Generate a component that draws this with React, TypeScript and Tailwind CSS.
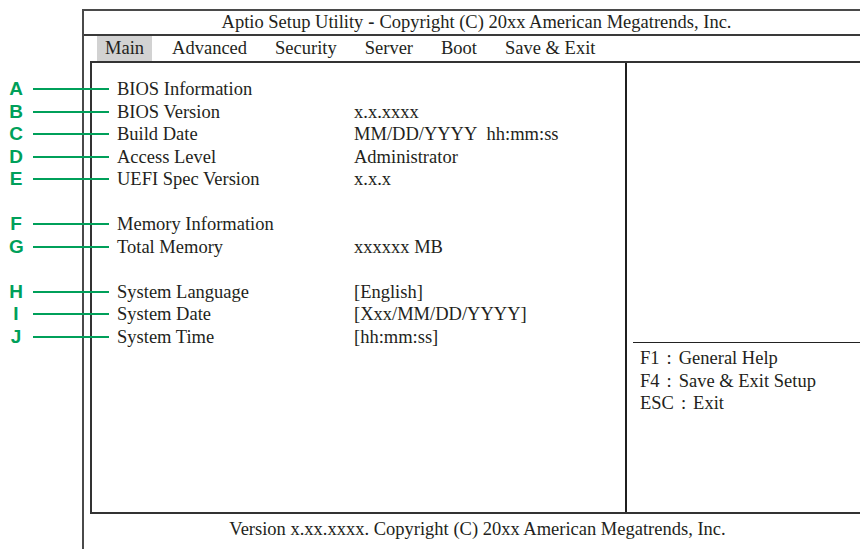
import React from "react";

interface RowType {
  callout?: string;
  label?: string;
  value?: string;
}

const rows: RowType[] = [
  { callout: "A", label: "BIOS Information" },
  { callout: "B", label: "BIOS Version", value: "x.x.xxxx" },
  { callout: "C", label: "Build Date", value: "MM/DD/YYYY\u00a0\u00a0hh:mm:ss" },
  { callout: "D", label: "Access Level", value: "Administrator" },
  { callout: "E", label: "UEFI Spec Version", value: "x.x.x" },
  {},
  { callout: "F", label: "Memory Information" },
  { callout: "G", label: "Total Memory", value: "xxxxxx MB" },
  {},
  { callout: "H", label: "System Language", value: "[English]" },
  { callout: "I", label: "System Date", value: "[Xxx/MM/DD/YYYY]" },
  { callout: "J", label: "System Time", value: "[hh:mm:ss]" },
];

const menu = ["Main", "Advanced", "Security", "Server", "Boot", "Save & Exit"];

const help = [
  { key: "F1", text: "General Help" },
  { key: "F4", text: "Save & Exit Setup" },
  { key: "ESC", text: "Exit" },
];

const App: React.FC = () => {
  return (
    <div className="relative w-[860px] h-[549px] overflow-hidden bg-white text-[#231f20] font-['Liberation_Serif',serif] text-[18.5px]">
      <div className="flex pl-[82px] pt-[9px]">
        <div className="w-[791px] h-[600px] shrink-0 border-t-2 border-l-2 border-[#4a4a4a]">
          {/* title */}
          <div className="h-[25px] flex items-center justify-center border-b-2 border-[#3a3a3a] leading-none pr-[4px]">
            Aptio Setup Utility <span className="font-bold mx-[5px]">-</span> Copyright (C) 20xx American Megatrends, Inc.
          </div>

          {/* menu bar */}
          <div className="h-[25px] flex items-stretch pl-[13px] gap-[12px]">
            {menu.map((item, i) => (
              <div
                key={item}
                className={`flex items-center px-[8px] leading-none ${
                  i === 0 ? "bg-[#d2d2d2]" : ""
                }`}
              >
                {item}
              </div>
            ))}
          </div>

          {/* main frame */}
          <div className="ml-[6px] h-[453px] flex border-t-2 border-l-2 border-b-2 border-[#333]">
            <div className="w-[535px] shrink-0 border-r-2 border-[#1f1f1f] pl-[25px] pt-[15px]">
              {rows.map((row, i) => (
                <div key={i} className="relative flex h-[22.5px] leading-[22.5px]">
                  {row.callout && (
                    <>
                      <span className="absolute left-[-108px] top-0 w-[14px] text-center font-['Liberation_Sans',sans-serif] font-bold text-[19px] text-[#00a05a] leading-[22.5px]">
                        {row.callout}
                      </span>
                      <span className="absolute left-[-84px] top-[10px] w-[76px] h-[2px] bg-[#00a05a]" />
                    </>
                  )}
                  <span className="w-[237px] shrink-0 whitespace-nowrap">{row.label}</span>
                  <span className="whitespace-nowrap">{row.value}</span>
                </div>
              ))}
            </div>

            <div className="flex-1 pt-[279px]">
              <div className="ml-[6px] h-[1px] bg-[#222]" />
              <div className="pl-[13px] pt-[4px]">
                {help.map((h) => (
                  <div key={h.key} className="h-[22.5px] leading-[22.5px] whitespace-nowrap">
                    {h.key}
                    <span className="mx-[7px]">:</span>
                    {h.text}
                  </div>
                ))}
              </div>
            </div>
          </div>

          {/* footer */}
          <div className="h-[30px] flex items-center justify-center leading-none pr-[2px]">
            Version x.xx.xxxx. Copyright (C) 20xx American Megatrends, Inc.
          </div>
        </div>
      </div>
    </div>
  );
};

export default App;
